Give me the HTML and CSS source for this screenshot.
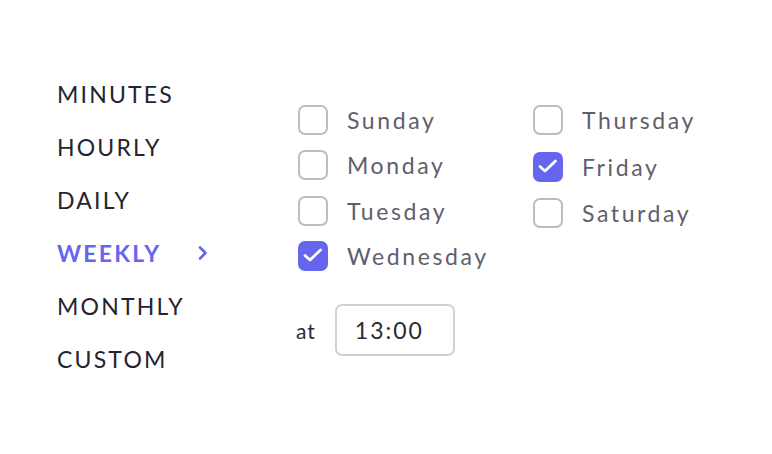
FILE: index.html
```html
<!DOCTYPE html>
<html lang="en">

<head>
    <meta charset="UTF-8">
    <title>Schedule</title>
    <link rel="stylesheet" href="styles.css">
</head>

<body>
    <div class="page">
        <ul class="freq-menu">
            <li>MINUTES</li>
            <li>HOURLY</li>
            <li>DAILY</li>
            <li class="active">WEEKLY
                <svg class="chevron" width="12" height="16" viewBox="0 0 12 16">
                    <polyline points="3,2.5 8.5,8 3,13.5" fill="none" stroke="currentColor" stroke-width="2.6" stroke-linecap="round" stroke-linejoin="round" />
                </svg>
            </li>
            <li>MONTHLY</li>
            <li>CUSTOM</li>
        </ul>

        <div class="weekly">
            <div class="days">
                <div class="day-col">
                    <label class="day"><span class="box"></span>Sunday</label>
                    <label class="day"><span class="box"></span>Monday</label>
                    <label class="day"><span class="box"></span>Tuesday</label>
                    <label class="day"><span class="box checked">
                        <svg width="26" height="26" viewBox="0 0 26 26"><polyline points="5,12.5 10,17 20.5,7" fill="none" stroke="#fff" stroke-width="2.8" stroke-linecap="round" stroke-linejoin="round" /></svg>
                    </span>Wednesday</label>
                </div>
                <div class="day-col right">
                    <label class="day"><span class="box"></span>Thursday</label>
                    <label class="day"><span class="box checked">
                        <svg width="26" height="26" viewBox="0 0 26 26"><polyline points="5,12.5 10,17 20.5,7" fill="none" stroke="#fff" stroke-width="2.8" stroke-linecap="round" stroke-linejoin="round" /></svg>
                    </span>Friday</label>
                    <label class="day"><span class="box"></span>Saturday</label>
                </div>
            </div>

            <div class="time-row">
                <span class="at">at</span>
                <div class="time-input">13:00</div>
            </div>
        </div>
    </div>
</body>

</html>
```

FILE: styles.css
```css
* {
    margin: 0;
    padding: 0;
    box-sizing: border-box;
}

body {
    font-family: Lato, "Open Sans", sans-serif;
    background: #ffffff;
    width: 772px;
    height: 454px;
    overflow: hidden;
}

.page {
    display: flex;
    padding: 67px 0 0 57px;
}

/* Frequency menu */
.freq-menu {
    list-style: none;
    width: 150px;
    margin-right: 91px;
}

.freq-menu li {
    display: flex;
    justify-content: space-between;
    align-items: center;
    height: 53px;
    font-size: 23px;
    letter-spacing: 2.2px;
    color: #23242f;
    white-space: nowrap;
}

.freq-menu li.active {
    color: #6565ee;
    font-weight: bold;
}

.chevron {
    color: #6565ee;
    margin-right: -2px;
}

/* Day checkboxes */
.weekly {
    padding-top: 30px;
}

.days {
    display: flex;
}

.day-col {
    width: 235px;
    display: flex;
    flex-direction: column;
}

.day-col .day {
    height: 45.5px;
}

.day-col.right .day {
    height: 46.5px;
}

.day {
    display: flex;
    align-items: center;
    font-size: 23px;
    letter-spacing: 2.6px;
    color: #605e6b;
    white-space: nowrap;
}

.box {
    width: 30px;
    height: 30px;
    border: 2px solid #bdbdbd;
    border-radius: 7px;
    margin-right: 19px;
    flex-shrink: 0;
}

.box svg {
    display: block;
}

.box.checked {
    background: #6565ee;
    border-color: #6565ee;
}

/* Time */
.time-row {
    display: flex;
    align-items: center;
    margin-top: 25px;
    margin-left: -2px;
}

.at {
    font-size: 21px;
    letter-spacing: 1px;
    color: #2c2c36;
    margin-right: 19px;
}

.time-input {
    width: 120px;
    height: 52px;
    border: 2px solid #d2d2d2;
    border-radius: 7px;
    padding-left: 18px;
    display: flex;
    align-items: center;
    font-size: 23px;
    letter-spacing: 2px;
    color: #2b2b33;
}
```
